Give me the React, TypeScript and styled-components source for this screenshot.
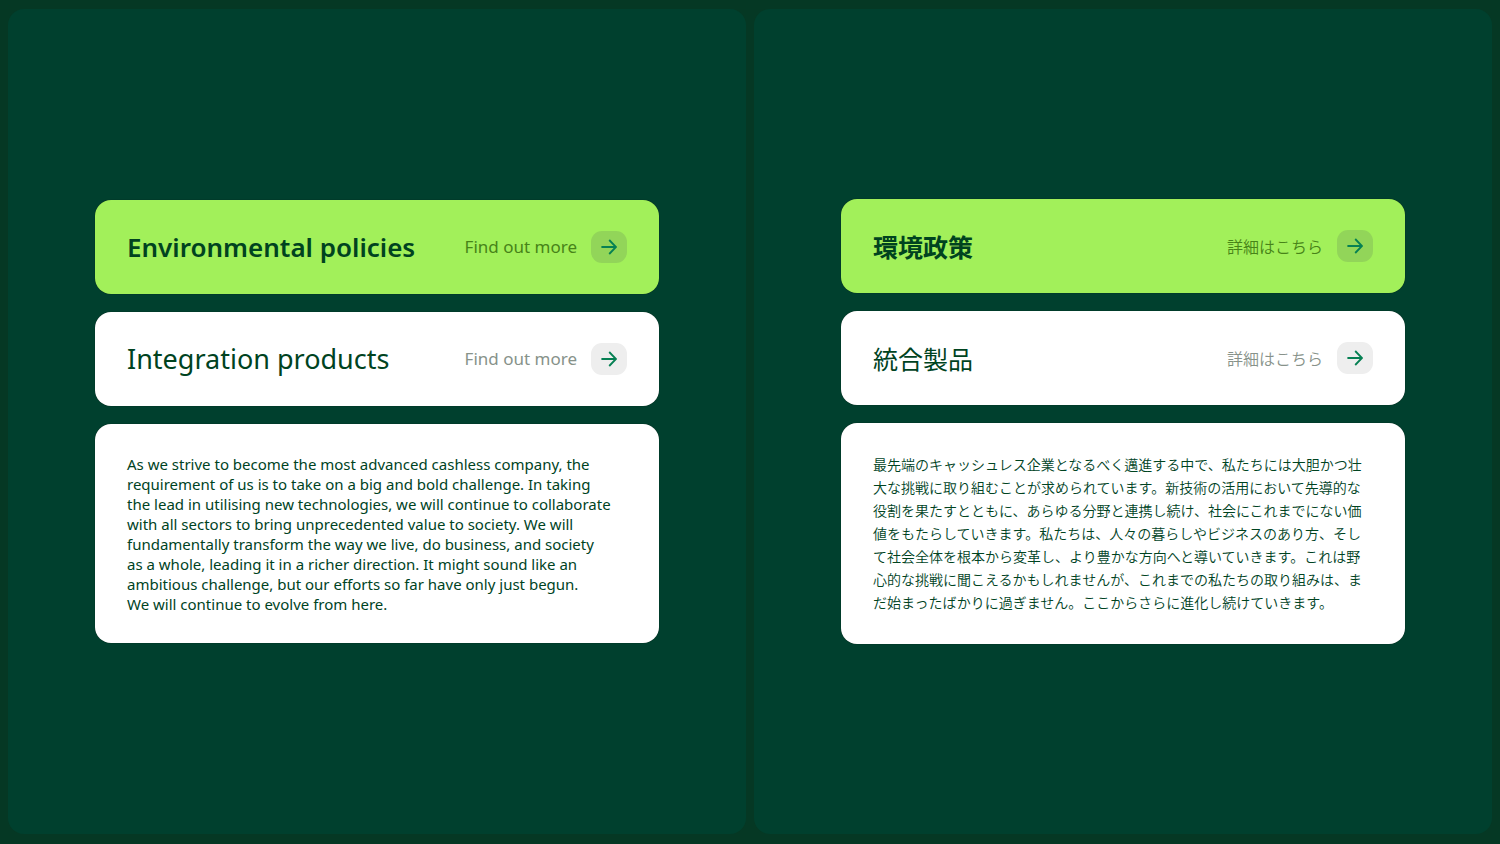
import React from "react";
import styled, { createGlobalStyle } from "styled-components";

const GlobalStyle = createGlobalStyle`
  *, *::before, *::after { box-sizing: border-box; }
  body {
    margin: 0;
    background: #053824;
    color: #00431f;
    font-family: "Noto Sans", "Noto Sans CJK JP", sans-serif;
  }
`;

const Page = styled.main`
  display: grid;
  grid-template-columns: 1fr 1fr;
  gap: 8px;
  min-height: 100vh;
  padding: 9px 8px 10px;
`;

const Panel = styled.section`
  display: flex;
  flex-direction: column;
  justify-content: center;
  gap: 18px;
  padding: 32px 87px;
  border-radius: 16px;
  background: #00402e;

  &:lang(ja) {
    font-family: "Noto Sans CJK JP", sans-serif;
  }
`;

const Card = styled.article<{ $accent?: boolean }>`
  display: flex;
  align-items: center;
  justify-content: space-between;
  min-height: 94px;
  padding: 24px 32px;
  border-radius: 16px;
  background: ${(p) => (p.$accent ? "#a2f05a" : "#ffffff")};
  box-shadow: 0 0 1px #001a10;
`;

const Title = styled.h2<{ $bold?: boolean }>`
  margin: 0;
  font-size: ${(p) => (p.$bold ? 26 : 27)}px;
  line-height: 36px;
  font-weight: ${(p) => (p.$bold ? 600 : 400)};

  &:lang(ja) {
    font-size: 25px;
    font-weight: ${(p) => (p.$bold ? 700 : 400)};
  }
`;

const MoreLink = styled.a<{ $accent?: boolean }>`
  display: flex;
  align-items: center;
  gap: 14px;
  color: ${(p) => (p.$accent ? "#478318" : "#87928a")};
  font-size: 17px;
  line-height: 24px;
  text-decoration: none;

  &:lang(ja) {
    font-size: 16px;
    font-weight: 350;
  }
`;

const ArrowBadge = styled.span<{ $accent?: boolean }>`
  display: grid;
  place-items: center;
  width: 36px;
  height: 32px;
  border-radius: 11px;
  background: ${(p) => (p.$accent ? "#92d559" : "#eeeeee")};
  color: #068053;
`;

const TextCard = styled(Card)`
  padding: 29px 32px;
  min-height: 219px;

  &:lang(ja) {
    min-height: 221px;
  }
`;

const Copy = styled.p`
  margin: 0;
  font-size: 15px;
  line-height: 20px;

  &:lang(ja) {
    font-size: 14px;
    line-height: 23px;
    font-weight: 350;
  }
`;

const Arrow = () => (
  <svg width="16" height="16" viewBox="0 0 16 16" fill="none" stroke="currentColor" strokeWidth="1.8" aria-hidden="true">
    <path d="M0.4 8H15M8.2 1L15 8L8.2 15" />
  </svg>
);

interface RowProps {
  title: string;
  more: string;
  accent?: boolean;
}

const LinkCard = ({ title, more, accent }: RowProps) => (
  <Card $accent={accent}>
    <Title $bold={accent}>{title}</Title>
    <MoreLink href="#" $accent={accent}>
      {more}
      <ArrowBadge $accent={accent}>
        <Arrow />
      </ArrowBadge>
    </MoreLink>
  </Card>
);

const englishLines = [
  "As we strive to become the most advanced cashless company, the",
  "requirement of us is to take on a big and bold challenge. In taking",
  "the lead in utilising new technologies, we will continue to collaborate",
  "with all sectors to bring unprecedented value to society. We will",
  "fundamentally transform the way we live, do business, and society",
  "as a whole, leading it in a richer direction. It might sound like an",
  "ambitious challenge, but our efforts so far have only just begun.",
  "We will continue to evolve from here.",
];

export default function App() {
  return (
    <>
      <GlobalStyle />
      <Page>
        <Panel lang="en">
          <LinkCard accent title="Environmental policies" more="Find out more" />
          <LinkCard title="Integration products" more="Find out more" />
          <TextCard>
            <Copy>
              {englishLines.map((line) => (
                <React.Fragment key={line}>
                  {line}
                  <br />
                </React.Fragment>
              ))}
            </Copy>
          </TextCard>
        </Panel>
        <Panel lang="ja">
          <LinkCard accent title="環境政策" more="詳細はこちら" />
          <LinkCard title="統合製品" more="詳細はこちら" />
          <TextCard>
            <Copy>
              最先端のキャッシュレス企業となるべく邁進する中で、私たちには大胆かつ壮大な挑戦に取り組むことが求められています。新技術の活用において先導的な役割を果たすとともに、あらゆる分野と連携し続け、社会にこれまでにない価値をもたらしていきます。私たちは、人々の暮らしやビジネスのあり方、そして社会全体を根本から変革し、より豊かな方向へと導いていきます。これは野心的な挑戦に聞こえるかもしれませんが、これまでの私たちの取り組みは、まだ始まったばかりに過ぎません。ここからさらに進化し続けていきます。
            </Copy>
          </TextCard>
        </Panel>
      </Page>
    </>
  );
}
